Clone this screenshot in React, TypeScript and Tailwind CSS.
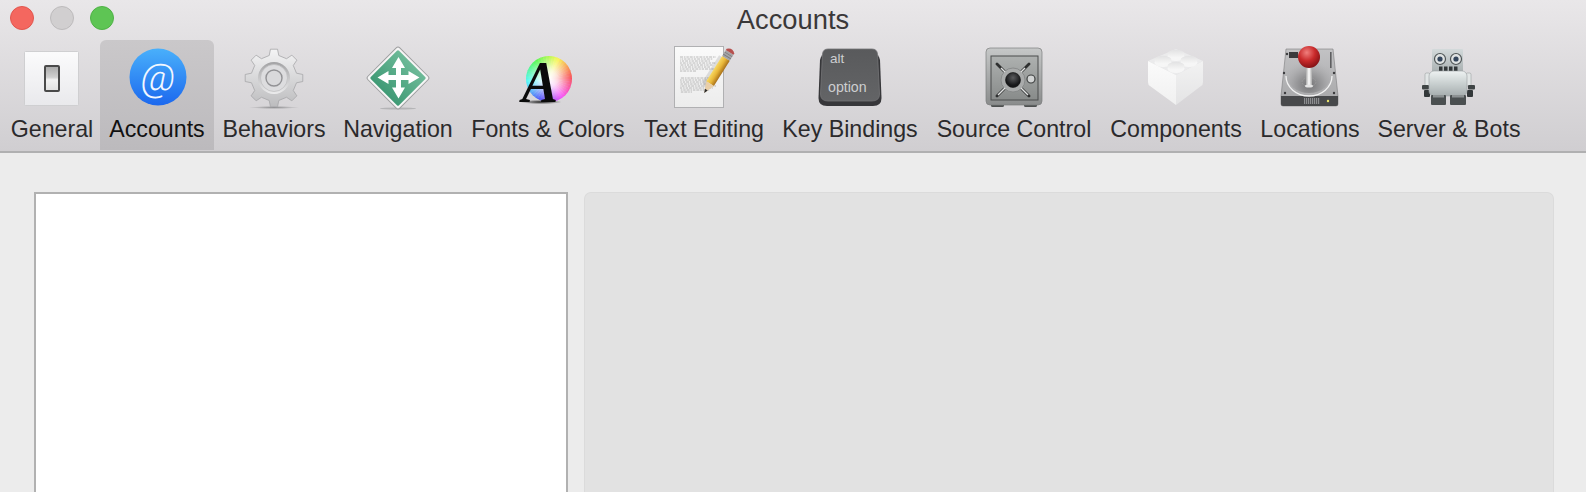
// App.tsx - Xcode preferences window, Accounts tab
import React from "react";

const GeneralIcon = () => (
  <svg viewBox="0 0 64 64" className="block w-16 h-16 shrink-0">
    <defs>
      <linearGradient id="genBg" x1="0" y1="0" x2="0" y2="1">
        <stop offset="0" stopColor="#fbfbfc" />
        <stop offset="1" stopColor="#e9e9ec" />
      </linearGradient>
      <linearGradient id="genSw" x1="0" y1="0" x2="0" y2="1">
        <stop offset="0" stopColor="#a9a9a9" />
        <stop offset="0.45" stopColor="#d0d0d0" />
        <stop offset="0.55" stopColor="#f2f2f2" />
        <stop offset="1" stopColor="#e0e0e0" />
      </linearGradient>
    </defs>
    <rect x="4.5" y="5.5" width="54" height="54" rx="1" fill="url(#genBg)" stroke="#cfcfd1" />
    <rect x="25" y="20" width="14" height="25" rx="1" fill="url(#genSw)" stroke="#4a4a4a" strokeWidth="2" />
  </svg>
);

const AccountsIcon = () => (
  <svg viewBox="0 0 64 64" className="block w-16 h-16 shrink-0">
    <defs>
      <linearGradient id="accBg" x1="0" y1="0" x2="0" y2="1">
        <stop offset="0" stopColor="#49b0fb" />
        <stop offset="1" stopColor="#1c68ee" />
      </linearGradient>
    </defs>
    <circle cx="33" cy="31" r="28.5" fill="url(#accBg)" />
    <text x="33" y="44" textAnchor="middle" fill="#f2f7ff" fontSize="38" fontWeight="300" fontFamily="Roboto, sans-serif" transform="skewX(-6) translate(3.5 0)">@</text>
  </svg>
);

// Eight tooth outline around the centre of a 64 box
const gearPath = Array.from({ length: 8 })
  .map((_, i) => {
    const c = (i * 45 - 90) * (Math.PI / 180);
    const pt = (r: number, off: number) => {
      const a = c + off * (Math.PI / 180);
      return `${32 + r * Math.cos(a)} ${32 + r * Math.sin(a)}`;
    };
    return `${i === 0 ? "M" : "L"}${pt(23, -12)} L${pt(29, -7)} L${pt(29, 7)} L${pt(23, 12)}`;
  })
  .join(" ") + " Z";

const GearIcon = () => (
  <svg viewBox="0 0 64 64" className="block w-16 h-16 shrink-0">
    <defs>
      <linearGradient id="gearBg" x1="0" y1="0" x2="0" y2="1">
        <stop offset="0" stopColor="#f4f4f5" />
        <stop offset="1" stopColor="#bcbcbe" />
      </linearGradient>
      <linearGradient id="gearIn" x1="0" y1="0" x2="0" y2="1">
        <stop offset="0" stopColor="#a2a2a4" />
        <stop offset="1" stopColor="#ececed" />
      </linearGradient>
      <radialGradient id="gearSh">
        <stop offset="0" stopColor="#8e8e90" />
        <stop offset="1" stopColor="#8e8e90" stopOpacity="0" />
      </radialGradient>
    </defs>
    <ellipse cx="32" cy="61.5" rx="25" ry="1.5" fill="url(#gearSh)" />
    <path d={gearPath} fill="url(#gearBg)" stroke="#a6a6a8" strokeWidth="0.8" strokeLinejoin="round" />
    <circle cx="32" cy="32" r="16" fill="url(#gearIn)" />
    <circle cx="32" cy="32" r="13.5" fill="#dddddf" stroke="#bdbdbf" strokeWidth="0.7" />
    <circle cx="32" cy="32" r="8" fill="#d9d9db" stroke="#929295" strokeWidth="1.4" />
  </svg>
);

const NavigationIcon = () => (
  <svg viewBox="0 0 64 64" className="block w-16 h-16 shrink-0">
    <defs>
      <linearGradient id="navBg" x1="0" y1="0" x2="0" y2="1">
        <stop offset="0" stopColor="#6dba98" />
        <stop offset="1" stopColor="#3f9a75" />
      </linearGradient>
    </defs>
    <ellipse cx="32" cy="62.5" rx="18" ry="1" fill="#b4b4b6" />
    <rect x="9.5" y="9.5" width="45" height="45" rx="2.5" transform="rotate(45 32 32)" fill="#f5f5f5" stroke="#9d9d9f" />
    <rect x="12" y="12" width="40" height="40" rx="1.5" transform="rotate(45 32 32)" fill="url(#navBg)" />
    <path
      d="M32.5 11 L39 22 H35 V29 H42.5 V25 L53.5 31.5 L42.5 38 V34 H35 V41.5 H39 L32.5 52.5 L26 41.5 H30 V34 H22.5 V38 L11.5 31.5 L22.5 25 V29 H30 V22 H26 Z"
      fill="#ffffff"
    />
  </svg>
);

const FontsIcon = () => (
  <svg viewBox="0 0 64 64" className="block w-16 h-16 shrink-0 overflow-visible">
    <defs>
      <radialGradient id="fontWhite">
        <stop offset="0" stopColor="#ffffff" />
        <stop offset="0.35" stopColor="#ffffff" stopOpacity="0.8" />
        <stop offset="1" stopColor="#ffffff" stopOpacity="0" />
      </radialGradient>
      <radialGradient id="fontSh">
        <stop offset="0" stopColor="#222222" />
        <stop offset="1" stopColor="#222222" stopOpacity="0" />
      </radialGradient>
      <clipPath id="fontClip">
        <circle cx="33" cy="33" r="23" />
      </clipPath>
    </defs>
    <g clipPath="url(#fontClip)">
      {Array.from({ length: 48 }).map((_, i) => {
        const a0 = ((i * 7.5 - 90.5) * Math.PI) / 180;
        const a1 = (((i + 1) * 7.5 - 89.5) * Math.PI) / 180;
        const d = `M33 33 L${33 + 26 * Math.cos(a0)} ${33 + 26 * Math.sin(a0)} L${33 + 26 * Math.cos(a1)} ${33 + 26 * Math.sin(a1)} Z`;
        return <path key={i} d={d} fill={`hsl(${80 - i * 7.5}, 92%, 64%)`} />;
      })}
    </g>
    <circle cx="33" cy="33" r="23" fill="url(#fontWhite)" />
    <ellipse cx="25" cy="56" rx="21" ry="2.2" fill="url(#fontSh)" />
    <text transform="translate(6 56) scale(0.9 1)" fill="#0b0b0b" fontSize="60" fontWeight="700" fontStyle="italic" fontFamily="'Liberation Serif', serif">A</text>
  </svg>
);

const TextEditIcon = () => {
  const rows = [11, 13, 15, 17, 19, 21, 23, 25, 32, 34, 36, 38, 40, 42, 44, 46];
  return (
    <svg viewBox="0 0 64 64" className="block w-16 h-16 shrink-0">
      <defs>
        <linearGradient id="pageBg" x1="0" y1="0" x2="0" y2="1">
          <stop offset="0" stopColor="#fafafa" />
          <stop offset="1" stopColor="#ececec" />
        </linearGradient>
        <linearGradient id="pencilBody" x1="0" y1="0" x2="1" y2="0">
          <stop offset="0" stopColor="#f7d964" />
          <stop offset="0.5" stopColor="#e8b638" />
          <stop offset="1" stopColor="#a8701a" />
        </linearGradient>
      </defs>
      <rect x="2.5" y="0.5" width="49" height="61" fill="url(#pageBg)" stroke="#b0b0b2" />
      {rows.map((y, i) => (
        <line
          key={y}
          x1="8"
          x2={i === 7 ? 24 : i === 15 ? 20 : 44 - (i % 3) * 3}
          y1={y}
          y2={y}
          stroke="#a8a8a8"
          strokeWidth="0.8"
          strokeDasharray="3 0.9 1.6 0.9 2.4 0.9"
          strokeDashoffset={i * 2.3}
        />
      ))}
      <g transform="rotate(32 46 25)">
        <path d="M41.5 10 H46 V46 L41.5 40 Z" fill="#000000" opacity="0.1" transform="translate(-3 1)" />
        <rect x="41.5" y="10" width="9" height="30" fill="url(#pencilBody)" />
        <path d="M41.5 40 H50.5 L46 51 Z" fill="#e9cfa9" />
        <path d="M44.4 47 H47.6 L46 51 Z" fill="#2b2b2b" />
        <rect x="41.5" y="3" width="9" height="7" fill="#a5a5a7" />
        <rect x="41.5" y="5" width="9" height="0.8" fill="#77777a" />
        <rect x="41.5" y="7.5" width="9" height="0.8" fill="#77777a" />
        <path d="M41.5 3 V1.5 Q46 -3 50.5 1.5 V3 Z" fill="#b6504e" />
      </g>
    </svg>
  );
};

const KeyIcon = () => (
  <svg viewBox="0 0 64 64" className="block w-16 h-16 shrink-0">
    <defs>
      <linearGradient id="keyFace" x1="0" y1="0" x2="0" y2="1">
        <stop offset="0" stopColor="#595a5c" />
        <stop offset="1" stopColor="#636466" />
      </linearGradient>
    </defs>
    <path d="M8 8 H56 Q61 8 62 14 L63.5 52 Q63.5 60 55 60 H9 Q0.5 60 0.5 52 L2 14 Q3 8 8 8 Z" fill="#37373a" />
    <path d="M10 3 H54 Q59 3 59.5 8 L61.5 48 Q61.5 55 54 55 H10 Q2.5 55 2.5 48 L4.5 8 Q5 3 10 3 Z" fill="url(#keyFace)" stroke="#737476" strokeWidth="0.8" />
    <text x="12" y="17" fill="#cdced0" fontSize="13.5" fontFamily="'Liberation Sans', sans-serif">alt</text>
    <text x="10" y="46" fill="#cdced0" fontSize="14.2" fontFamily="'Liberation Sans', sans-serif">option</text>
  </svg>
);

const SafeIcon = () => (
  <svg viewBox="0 0 64 64" className="block w-16 h-16 shrink-0">
    <defs>
      <linearGradient id="safeBody" x1="0" y1="0" x2="0" y2="1">
        <stop offset="0" stopColor="#c6c8c8" />
        <stop offset="1" stopColor="#8a8c8c" />
      </linearGradient>
      <linearGradient id="safeDoor" x1="0" y1="0" x2="0" y2="1">
        <stop offset="0" stopColor="#aeb1b0" />
        <stop offset="1" stopColor="#888b8a" />
      </linearGradient>
      <radialGradient id="safeDial" cx="0.5" cy="0.35">
        <stop offset="0" stopColor="#5b5c5e" />
        <stop offset="1" stopColor="#17181a" />
      </radialGradient>
    </defs>
    <rect x="9" y="57" width="13" height="4" rx="1.5" fill="#4e5050" />
    <rect x="42" y="57" width="13" height="4" rx="1.5" fill="#4e5050" />
    <rect x="4" y="2" width="56" height="57" rx="4" fill="url(#safeBody)" stroke="#7c7e7e" strokeWidth="0.7" />
    <rect x="9" y="10" width="47" height="44" fill="url(#safeDoor)" stroke="#4b4d4d" strokeWidth="1" />
    <g stroke="#2f3030" strokeWidth="2.8" strokeLinecap="round">
      <line x1="15" y1="18" x2="47" y2="50" />
      <line x1="47" y1="18" x2="15" y2="50" />
    </g>
    <circle cx="31" cy="34" r="12" fill="#a9abab" stroke="#828484" strokeWidth="0.8" />
    <g stroke="#e2e3e3" strokeWidth="1.4">
      <line x1="23" y1="42" x2="16" y2="49" />
      <line x1="39" y1="42" x2="46" y2="49" />
      <line x1="23" y1="26" x2="19" y2="22" />
      <line x1="39" y1="26" x2="43" y2="22" />
    </g>
    <circle cx="31" cy="34" r="7.5" fill="url(#safeDial)" stroke="#111111" strokeWidth="0.6" />
    <circle cx="49" cy="33" r="4" fill="#d2d4d4" stroke="#3e4040" strokeWidth="1.2" />
  </svg>
);

const LegoIcon = () => (
  <svg viewBox="0 0 64 64" className="block w-16 h-16 shrink-0">
    <defs>
      <linearGradient id="legoL" x1="0" y1="0" x2="0" y2="1">
        <stop offset="0" stopColor="#fbfbfb" />
        <stop offset="1" stopColor="#f0f0f0" />
      </linearGradient>
      <linearGradient id="legoR" x1="0" y1="0" x2="0" y2="1">
        <stop offset="0" stopColor="#f2f2f2" />
        <stop offset="1" stopColor="#e4e4e5" />
      </linearGradient>
      <linearGradient id="legoS" x1="0" y1="0" x2="0" y2="1">
        <stop offset="0" stopColor="#e2e2e3" />
        <stop offset="1" stopColor="#f8f8f8" />
      </linearGradient>
    </defs>
    <path d="M32 3 L59 15 L32 29 L4 15 Z" fill="#ebebec" />
    <path d="M4 15 L32 29 V59 L6 40 Q4 39 4 36 Z" fill="url(#legoL)" />
    <path d="M59 15 L32 29 V59 L57 40 Q59 39 59 36 Z" fill="url(#legoR)" />
    {[
      [32, 8],
      [19, 14],
      [45, 14],
      [32, 20],
    ].map(([x, y]) => (
      <g key={`${x}-${y}`}>
        <ellipse cx={x} cy={y + 2.5} rx="8.5" ry="4.5" fill="#f6f6f6" />
        <ellipse cx={x} cy={y} rx="8.5" ry="4.2" fill="url(#legoS)" />
      </g>
    ))}
  </svg>
);

const DriveIcon = () => (
  <svg viewBox="0 0 64 64" className="block w-16 h-16 shrink-0">
    <defs>
      <linearGradient id="driveTop" x1="0" y1="0" x2="0" y2="1">
        <stop offset="0" stopColor="#c2c2c4" />
        <stop offset="1" stopColor="#a6a6a8" />
      </linearGradient>
      <radialGradient id="driveDisk" cx="0.5" cy="0.8" r="0.62">
        <stop offset="0" stopColor="#757577" />
        <stop offset="0.55" stopColor="#a2a2a4" />
        <stop offset="1" stopColor="#b6b6b8" stopOpacity="0" />
      </radialGradient>
      <radialGradient id="knob" cx="0.4" cy="0.3" r="0.75">
        <stop offset="0" stopColor="#f07f7d" />
        <stop offset="0.5" stopColor="#c92a2b" />
        <stop offset="1" stopColor="#7c0f12" />
      </radialGradient>
      <linearGradient id="stick" x1="0" y1="0" x2="1" y2="0">
        <stop offset="0" stopColor="#a9a9a9" />
        <stop offset="0.5" stopColor="#ffffff" />
        <stop offset="1" stopColor="#a9a9a9" />
      </linearGradient>
    </defs>
    <path d="M8 3 H55 L60 50 V58 Q60 60 58 60 H5 Q3 60 3 58 V50 Z" fill="url(#driveTop)" stroke="#7c7c7e" strokeWidth="0.6" />
    <path d="M3 50 H60 V58 Q60 60 58 60 H5 Q3 60 3 58 Z" fill="#48494b" />
    {Array.from({ length: 8 }).map((_, i) => (
      <rect key={i} x={26 + i * 2} y="52" width="1.2" height="6" fill="#8c8d8f" />
    ))}
    <circle cx="50" cy="55" r="1.2" fill="#e9e36b" />
    <ellipse cx="31" cy="27" rx="23" ry="20" fill="url(#driveDisk)" />
    <path d="M8 30 A23 20 0 0 0 54 30" fill="none" stroke="#f2f2f2" strokeWidth="1.3" />
    <ellipse cx="31" cy="36" rx="7" ry="4.5" fill="none" stroke="#9a9a9c" strokeWidth="0.8" strokeDasharray="2 1" />
    {[
      [9, 8],
      [56, 47],
      [7, 47],
      [6, 27],
      [56, 27],
    ].map(([x, y]) => (
      <circle key={`${x}-${y}`} cx={x} cy={y} r="1.2" fill="#3c3c3e" />
    ))}
    <rect x="52" y="6" width="1.6" height="16" fill="#5e5e60" />
    <rect x="11" y="6" width="9" height="6" fill="#3a3a3c" />
    <rect x="28" y="18" width="6" height="22" fill="url(#stick)" />
    <ellipse cx="31" cy="40" rx="4" ry="1.5" fill="#e5e5e5" />
    <circle cx="31" cy="11" r="11" fill="url(#knob)" />
  </svg>
);

const RobotIcon = () => (
  <svg viewBox="0 0 64 64" className="block w-16 h-16 shrink-0">
    <defs>
      <linearGradient id="robHead" x1="0" y1="0" x2="0" y2="1">
        <stop offset="0" stopColor="#d3dadb" />
        <stop offset="1" stopColor="#a8afb0" />
      </linearGradient>
      <linearGradient id="robBody" x1="0" y1="0" x2="0" y2="1">
        <stop offset="0" stopColor="#eef2f2" />
        <stop offset="0.5" stopColor="#c9d0d0" />
        <stop offset="1" stopColor="#a6adae" />
      </linearGradient>
    </defs>
    <rect x="8" y="27" width="5" height="13" rx="1.5" fill="#e2e6e6" stroke="#8e9495" strokeWidth="0.5" />
    <rect x="49" y="27" width="5" height="13" rx="1.5" fill="#e2e6e6" stroke="#8e9495" strokeWidth="0.5" />
    <rect x="5" y="39" width="7" height="4.5" rx="1" fill="#3f4445" />
    <rect x="7" y="44" width="6" height="7" rx="1" fill="#33383a" />
    <rect x="51" y="39" width="7" height="4.5" rx="1" fill="#3f4445" />
    <rect x="50" y="44" width="6" height="7" rx="1" fill="#33383a" />
    <rect x="15" y="3" width="31" height="24" rx="1" fill="url(#robHead)" />
    <circle cx="23" cy="13" r="5.5" fill="#dfe3e3" stroke="#4f5556" strokeWidth="1.2" />
    <circle cx="39" cy="13" r="5.5" fill="#dfe3e3" stroke="#4f5556" strokeWidth="1.2" />
    <circle cx="23" cy="13" r="2.6" fill="#34465c" />
    <circle cx="39" cy="13" r="2.6" fill="#34465c" />
    <rect x="22" y="20.5" width="3.5" height="5" fill="#33383a" />
    <rect x="27" y="20.5" width="3.5" height="5" fill="#33383a" />
    <rect x="32" y="20.5" width="3.5" height="5" fill="#33383a" />
    <rect x="37" y="20.5" width="3.5" height="5" fill="#33383a" />
    <rect x="12" y="25" width="38" height="25" rx="5" fill="url(#robBody)" stroke="#9aa0a1" strokeWidth="0.6" />
    <rect x="14" y="49" width="15" height="10" rx="1" fill="#4b5051" />
    <rect x="33" y="49" width="16" height="10" rx="1" fill="#4b5051" />
    <rect x="16" y="49" width="11" height="2.5" fill="#8d9293" />
    <rect x="35" y="49" width="12" height="2.5" fill="#8d9293" />
  </svg>
);

const tabs = [
  { label: "General", width: "w-[96px]", icon: <GeneralIcon /> },
  { label: "Accounts", width: "w-[114px]", icon: <AccountsIcon />, active: true },
  { label: "Behaviors", width: "w-[120px]", icon: <GearIcon /> },
  { label: "Navigation", width: "w-[128px]", icon: <NavigationIcon /> },
  { label: "Fonts & Colors", width: "w-[172px]", icon: <FontsIcon /> },
  { label: "Text Editing", width: "w-[140px]", icon: <TextEditIcon /> },
  { label: "Key Bindings", width: "w-[152px]", icon: <KeyIcon /> },
  { label: "Source Control", width: "w-[176px]", icon: <SafeIcon /> },
  { label: "Components", width: "w-[148px]", icon: <LegoIcon /> },
  { label: "Locations", width: "w-[120px]", icon: <DriveIcon /> },
  { label: "Server & Bots", width: "w-[158px]", icon: <RobotIcon /> },
];

const App: React.FC = () => {
  return (
    <div className="h-[492px] w-full flex flex-col overflow-hidden bg-[#ececec] font-['Liberation_Sans',sans-serif]">
      {/* Title bar and toolbar */}
      <header className="h-[153px] shrink-0 border-b-2 border-[#b0b0b1] bg-gradient-to-b from-[#e9e7e9] to-[#d0ced1]">
        <div className="h-[40px] grid grid-cols-[1fr_auto_1fr] items-center">
          <div className="flex items-center gap-[16px] pl-[10px] pb-[4px]">
            <span className="w-[24px] h-[24px] rounded-full bg-[#f4675f] border border-[#e2564e]" />
            <span className="w-[24px] h-[24px] rounded-full bg-[#d1cfd0] border border-[#bdbbbc]" />
            <span className="w-[24px] h-[24px] rounded-full bg-[#5ec554] border border-[#4fb246]" />
          </div>
          <div className="text-[27.3px] leading-[38px] text-[#3a3839]">Accounts</div>
          <div />
        </div>
        <nav className="flex pl-[4px]">
          {tabs.map((tab) => (
            <div
              key={tab.label}
              className={`${tab.width} h-[110px] pt-[6px] flex flex-col items-center shrink-0 rounded-t-[6px] ${
                tab.active ? "bg-gradient-to-b from-[#cac8ca] to-[#bcbabd] text-[#111111]" : "text-[#2b2a2c]"
              }`}
            >
              {tab.icon}
              <span className="mt-[5px] text-[23.2px] leading-[28px] whitespace-nowrap">{tab.label}</span>
            </div>
          ))}
        </nav>
      </header>

      {/* Accounts list and detail pane */}
      <main className="flex-1 flex gap-[16px] pt-[39px] pl-[34px] pr-[32px] min-h-0">
        <div className="w-[534px] bg-white border-2 border-b-0 border-[#b1b1b1]" />
        <div className="flex-1 bg-[#e2e2e2] border border-b-0 border-[#dbdbdb] rounded-t-[7px]" />
      </main>
    </div>
  );
};

export default App;
